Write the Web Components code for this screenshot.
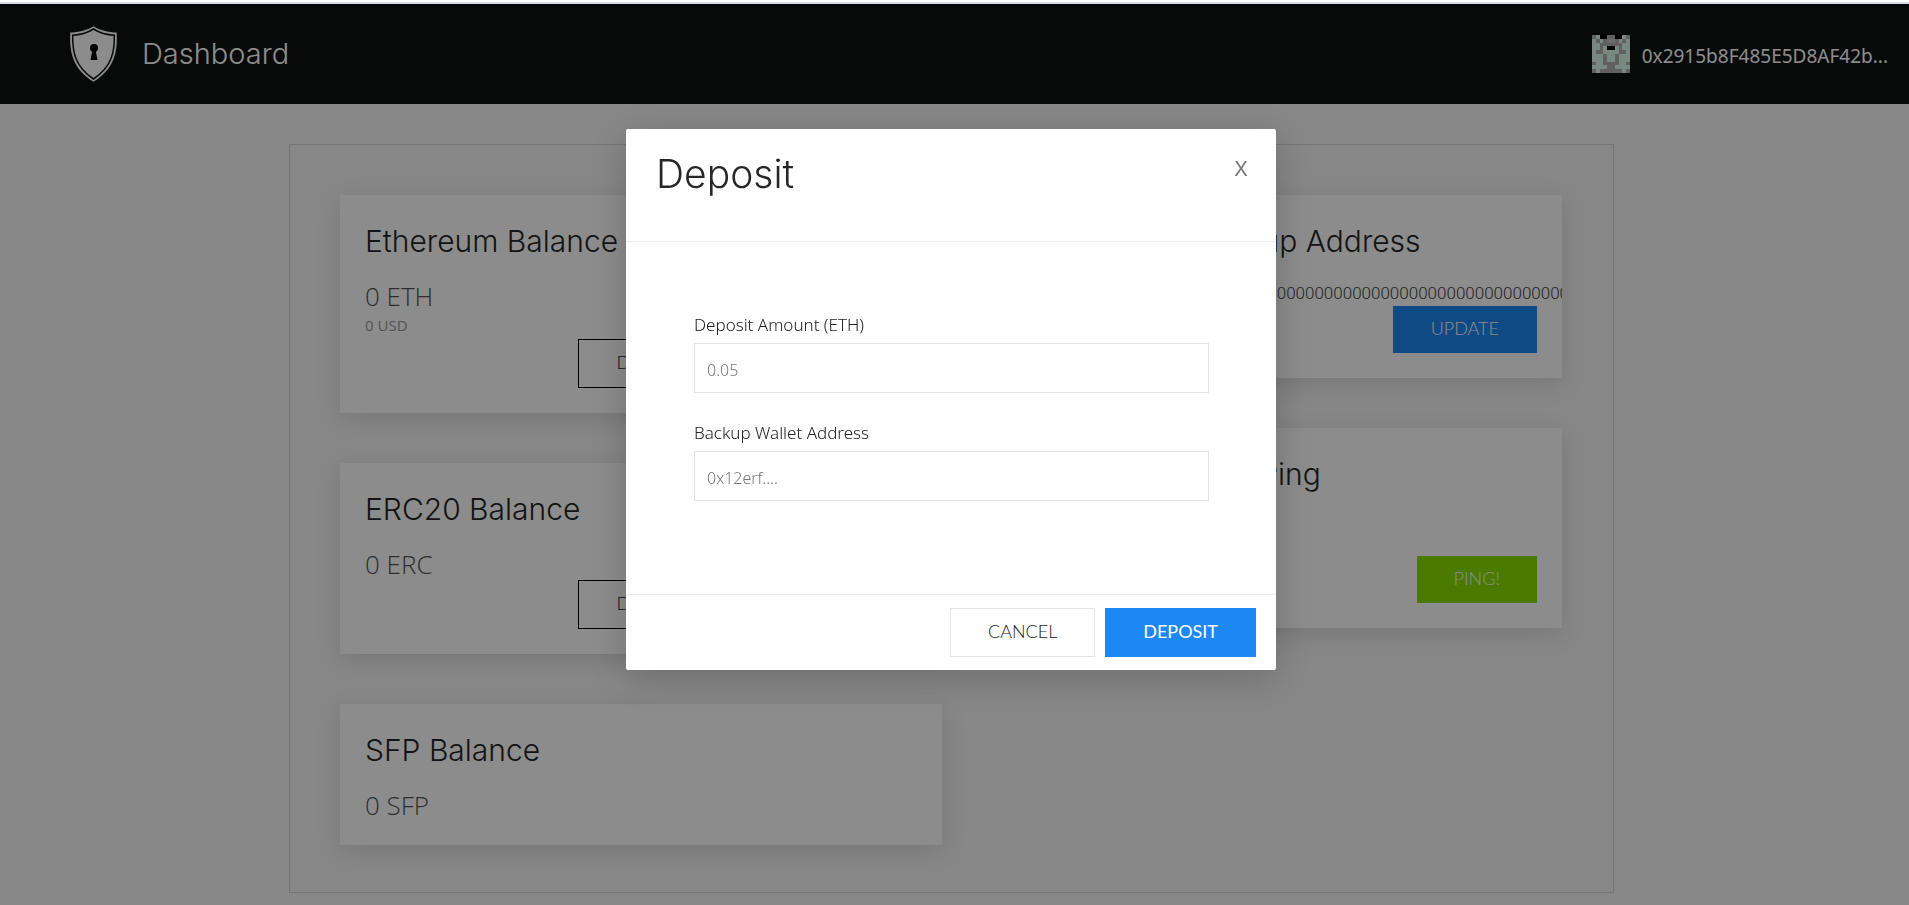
<!DOCTYPE html>
<html lang="en">
<head>
<meta charset="utf-8">
<title>Dashboard</title>
<style>
  body { margin: 0; background: #f6f6f6; font-family: "Noto Sans", "Open Sans", sans-serif; }
</style>
</head>
<body>
<wallet-page></wallet-page>

<script>
const define = (name, html, setup) => {
  const template = document.createElement('template');
  template.innerHTML = html;
  customElements.define(name, class extends HTMLElement {
    constructor() {
      super();
      this.attachShadow({ mode: 'open' }).append(template.content.cloneNode(true));
    }
    connectedCallback() { if (setup) setup(this, this.shadowRoot); }
  });
};

define('shield-logo', `
  <style>:host { display: block; width: 48px; height: 56px; } svg { display: block; }</style>
  <svg width="48" height="56" viewBox="0 0 48 56" aria-hidden="true">
    <path d="M23.500 .3C18.500 4 8 6.600 .3 6.600C-.5 23 1 42 23.500 55.800C46 42 47.500 23 46.700 6.600C39 6.600 28.500 4 23.500 .3Z" fill="#fff"/>
    <path d="M23.500 3C18 6.500 9 9 2.700 9.200C2.400 25 4.500 40.500 23.500 53C42.500 40.500 44.600 25 44.300 9.200C38 9 29 6.500 23.500 3Z" fill="#fff" stroke="#0f1211" stroke-width="1.500"/>
    <circle cx="24" cy="22" r="4" fill="#000"/>
    <path d="M22.500 24h3l2 10h-7z" fill="#000"/>
  </svg>`);

const AVATAR = ['g.kkggkk.g', '.g.gwwg.g.', '..gggggg..', '..g.kk.g..', '.gg....gg.',
                '...g..g...', '...g..g...', 'g..gggg..g', '....gg....', 'g.gggggg.g'];
define('account-avatar', `
  <style>:host { display: block; width: 38px; height: 38px; } svg { display: block; }</style>
  <svg width="38" height="38" viewBox="0 0 10 10" shape-rendering="crispEdges" aria-hidden="true"><rect width="10" height="10" fill="#dcf8ea"/></svg>`,
  (host, root) => {
    const fills = { g: '#b0b0b0', w: '#c4c4c4', k: '#000' };
    const svg = root.querySelector('svg');
    AVATAR.forEach((row, y) => [...row].forEach((cell, x) => {
      if (!fills[cell]) return;
      const r = document.createElementNS('http://www.w3.org/2000/svg', 'rect');
      for (const [k, v] of Object.entries({ x, y, width: 1, height: 1, fill: fills[cell] })) r.setAttribute(k, v);
      svg.append(r);
    }));
  });

define('top-bar', `
  <style>
    :host { display: block; }
    header { display: flex; align-items: center; height: 100px; padding: 0 21px 0 70px; box-sizing: border-box; background: #0f1211; color: #fff; }
    a { display: flex; align-items: center; gap: 24px; color: inherit; text-decoration: none; }
    .name { font: 300 29px/40px Inter, sans-serif; }
    .account { display: flex; align-items: center; gap: 12px; margin-left: auto; font-size: 19px; line-height: 28px; }
    ::slotted([slot="account"]) { padding-top: 3px; }
  </style>
  <header>
    <a href="#"><shield-logo></shield-logo><span class="name"><slot></slot></span></a>
    <div class="account"><account-avatar></account-avatar><slot name="account"></slot></div>
  </header>`);

define('action-button', `
  <style>
    :host { display: block; }
    button { display: block; box-sizing: border-box; height: 49px; padding: 0 37px 3px; border: 1px solid #e4e4e4; background: #fff; color: #222; font: 300 18px/24px Lato, sans-serif; text-transform: uppercase; cursor: pointer; }
    :host([kind="outline"]) button { border-color: #000; }
    :host([kind="primary"]) button { border-color: #1e88f2; background: #1e88f2; color: #fff; font-weight: 400; }
    :host([kind="info"]) button { height: 47px; padding: 0 38px 3px; border: 0; background: #1e88f2; color: #fff; }
    :host([kind="success"]) button { height: 47px; border: 0; background: #87de00; color: #fff; }
  </style>
  <button type="button"><slot></slot></button>`);

define('balance-card', `
  <style>
    :host { display: block; overflow: hidden; padding: 25px; background: #fff; box-shadow: 0 6px 24px rgba(0,0,0,.12); }
    h2 { margin: 0 0 19px; color: #262626; font: 300 30px/42px Inter, sans-serif; }
    .actions { display: flex; justify-content: flex-end; gap: 12px; }
    ::slotted(action-button) { margin-top: 1px; }
    ::slotted([slot="value"]) { display: block; color: #555; font: 300 26px/30px "Open Sans", sans-serif; }
    ::slotted([slot="fiat"]) { display: block; margin-top: 1px; color: #999; font: 400 15px/26px "Open Sans", sans-serif; }
    ::slotted([slot="address"]) { display: block; white-space: nowrap; color: #444; font: 300 17px/24px Roboto, sans-serif; }
    ::slotted([slot="status"]) { display: block; min-height: 41px; }
  </style>
  <h2><slot name="title"></slot></h2>
  <slot name="value"></slot><slot name="fiat"></slot><slot name="address"></slot><slot name="status"></slot>
  <div class="actions"><slot></slot></div>`);

define('form-field', `
  <style>
    :host { display: block; }
    label { display: block; margin-bottom: 6px; color: #222; font-size: 17px; font-weight: 300; line-height: 24px; }
    input { display: block; box-sizing: border-box; width: 100%; height: 50px; padding: 3px 12px 0; border: 1px solid #e2e2e2; border-radius: 0; background: #fff; color: #333; font: inherit; font-size: 16px; font-weight: 300; outline: 0; }
    input::placeholder { color: #777; opacity: 1; }
  </style>
  <label for="field"></label>
  <input id="field" type="text">`,
  (host, root) => {
    root.querySelector('label').textContent = host.getAttribute('label');
    root.querySelector('input').placeholder = host.getAttribute('hint');
  });

define('modal-dialog', `
  <style>
    :host { position: fixed; inset: 0; z-index: 1; box-sizing: border-box; padding: 129px 7px 0 0; background: rgba(0,0,0,.45); }
    section { width: 650px; max-width: 100%; margin: 0 auto; border-radius: 2px; background: #fff; box-shadow: 0 8px 40px rgba(0,0,0,.2); }
    header { display: flex; justify-content: space-between; align-items: flex-start; padding: 20px 20px 42px 30px; border-bottom: 1px solid #ececec; }
    h1 { margin: 0; color: #262626; font: 300 39px/50px Inter, sans-serif; }
    .close { width: 30px; height: 30px; margin: 5px 0 0; padding: 0; border: 0; background: none; color: #777; font: 400 20px/30px Inter, sans-serif; cursor: pointer; }
    .body { display: grid; gap: 28px; padding: 71px 67px 93px 68px; }
    footer { display: flex; justify-content: flex-end; gap: 10px; padding: 13px 20px; border-top: 1px solid #ececec; }
  </style>
  <section role="dialog" aria-labelledby="title">
    <header><h1 id="title"><slot name="title"></slot></h1><button class="close" type="button" aria-label="Close">X</button></header>
    <div class="body"><slot></slot></div>
    <footer><slot name="actions"></slot></footer>
  </section>`);

define('wallet-page', `
  <style>
    :host { display: block; }
    .strip { position: relative; z-index: 2; height: 2px; border-bottom: 2px solid #dcdde4; background: #fff; }
    main { padding: 40px 6px 12px 0; }
    .panel { display: grid; grid-template-columns: 602fr 394fr; column-gap: 226px; align-items: start; box-sizing: border-box; max-width: 1325px; margin: 0 auto; padding: 50px 51px 47px 50px; border: 1px solid #d6d6d6; }
    .column { display: grid; gap: 50px; min-width: 0; }
    .column > * { min-width: 0; }
  </style>
  <div class="strip"></div>
  <top-bar>Dashboard<span slot="account">0x2915b8F485E5D8AF42b...</span></top-bar>
  <main>
    <div class="panel">
      <div class="column">
        <balance-card>
          <span slot="title">Ethereum Balance</span>
          <span slot="value">0 ETH</span>
          <span slot="fiat">0 USD</span>
          <action-button kind="outline">Deposit</action-button>
          <action-button kind="outline">Withdraw</action-button>
        </balance-card>
        <balance-card>
          <span slot="title">ERC20 Balance</span>
          <span slot="value">0 ERC</span>
          <action-button kind="outline">Deposit</action-button>
          <action-button kind="outline">Withdraw</action-button>
        </balance-card>
        <balance-card>
          <span slot="title">SFP Balance</span>
          <span slot="value">0 SFP</span>
        </balance-card>
      </div>
      <div class="column">
        <balance-card>
          <span slot="title">Backup Address</span>
          <span slot="address">0x0000000000000000000000000000000000000000</span>
          <action-button kind="info">Update</action-button>
        </balance-card>
        <balance-card>
          <span slot="title">Last Ping</span>
          <span slot="status"></span>
          <action-button kind="success">Ping!</action-button>
        </balance-card>
      </div>
    </div>
  </main>
  <modal-dialog>
    <span slot="title">Deposit</span>
    <form-field label="Deposit Amount (ETH)" hint="0.05"></form-field>
    <form-field label="Backup Wallet Address" hint="0x12erf...."></form-field>
    <action-button slot="actions">Cancel</action-button>
    <action-button slot="actions" kind="primary">Deposit</action-button>
  </modal-dialog>`);
</script>
</body>
</html>
